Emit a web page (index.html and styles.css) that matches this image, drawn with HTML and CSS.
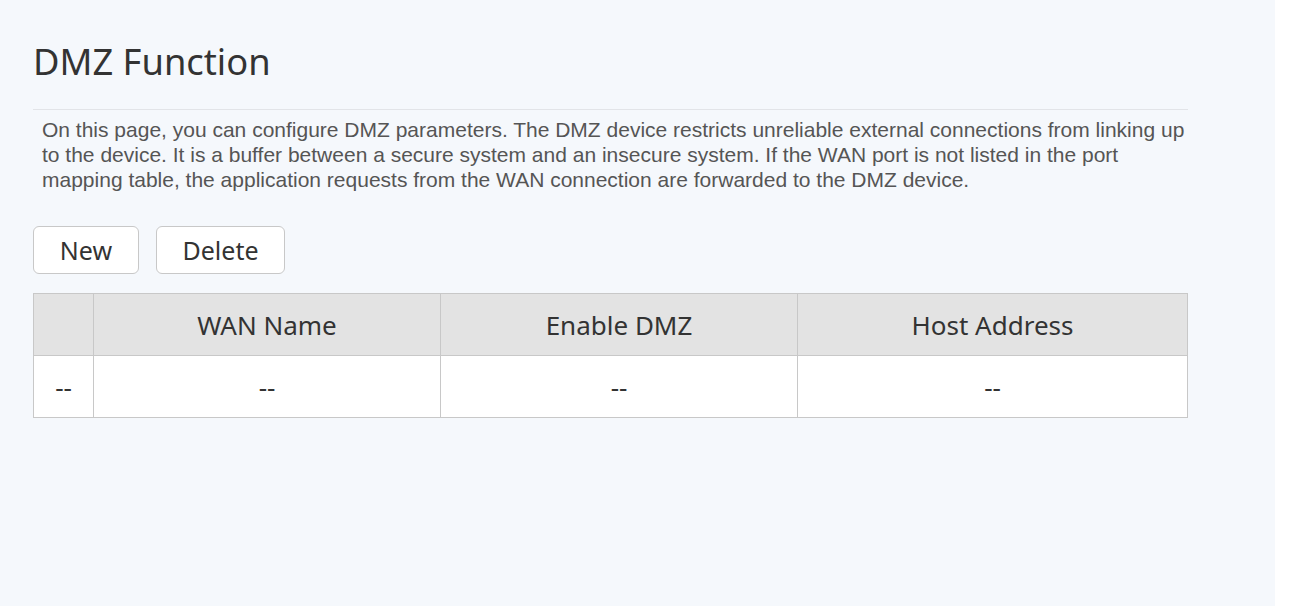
FILE: index.html
```html
<!DOCTYPE html>
<html>
<head>
<meta charset="utf-8">
<link rel="stylesheet" href="styles.css">
</head>
<body>
<div class="frame">
  <div class="content">
    <h1 class="title">DMZ Function</h1>
    <div class="divider"></div>
    <p class="desc">On this page, you can configure DMZ parameters. The DMZ device restricts unreliable external connections from linking up to the device. It is a buffer between a secure system and an insecure system. If the WAN port is not listed in the port mapping table, the application requests from the WAN connection are forwarded to the DMZ device.</p>
    <div class="actions">
      <button class="btn btn-new">New</button>
      <button class="btn btn-delete">Delete</button>
    </div>
    <table class="grid">
      <thead>
        <tr>
          <th class="c0"></th>
          <th class="c1">WAN Name</th>
          <th class="c2">Enable DMZ</th>
          <th class="c3">Host Address</th>
        </tr>
      </thead>
      <tbody>
        <tr>
          <td>--</td>
          <td>--</td>
          <td>--</td>
          <td>--</td>
        </tr>
      </tbody>
    </table>
  </div>
</div>
</body>
</html>
```

FILE: styles.css
```css
html, body {
  margin: 0;
  padding: 0;
  background: #ffffff;
  height: 100%;
}
.frame {
  width: 1275px;
  height: 606px;
  background: #f5f8fc;
  box-sizing: border-box;
  padding: 0 87px 0 33px;
}
.content {
  width: 1155px;
  padding-top: 37px;
}
.title {
  margin: 0;
  font-family: "Noto Sans", sans-serif;
  font-weight: 400;
  font-size: 36.3px;
  line-height: 48px;
  color: #333333;
}
.divider {
  margin-top: 24px;
  height: 1px;
  background: #e2e4e8;
}
.desc {
  margin: 7px 0 0 9px;
  font-family: "Liberation Sans", Arial, sans-serif;
  font-size: 21px;
  line-height: 25px;
  color: #555555;
}
.actions {
  display: flex;
  gap: 17px;
  margin-top: 34px;
}
.btn {
  height: 48px;
  box-sizing: border-box;
  background: #ffffff;
  border: 1px solid #c8c8c8;
  border-radius: 6px;
  font-family: "Noto Sans", sans-serif;
  font-size: 25px;
  color: #333333;
  padding: 0;
  cursor: pointer;
}
.btn-new { width: 106px; }
.btn-delete { width: 129px; }
.grid {
  margin-top: 19px;
  width: 1155px;
  border-collapse: collapse;
  font-family: "Noto Sans", sans-serif;
  font-size: 26px;
  color: #333333;
}
.grid th, .grid td {
  border: 1px solid #c8c8c8;
  height: 61px;
  padding: 0;
  text-align: center;
  font-weight: 400;
}
.grid th {
  background: #e3e3e3;
}
.grid td {
  background: #ffffff;
}
.c0 { width: 59px; }
.c1 { width: 346px; }
.c2 { width: 356px; }
```
